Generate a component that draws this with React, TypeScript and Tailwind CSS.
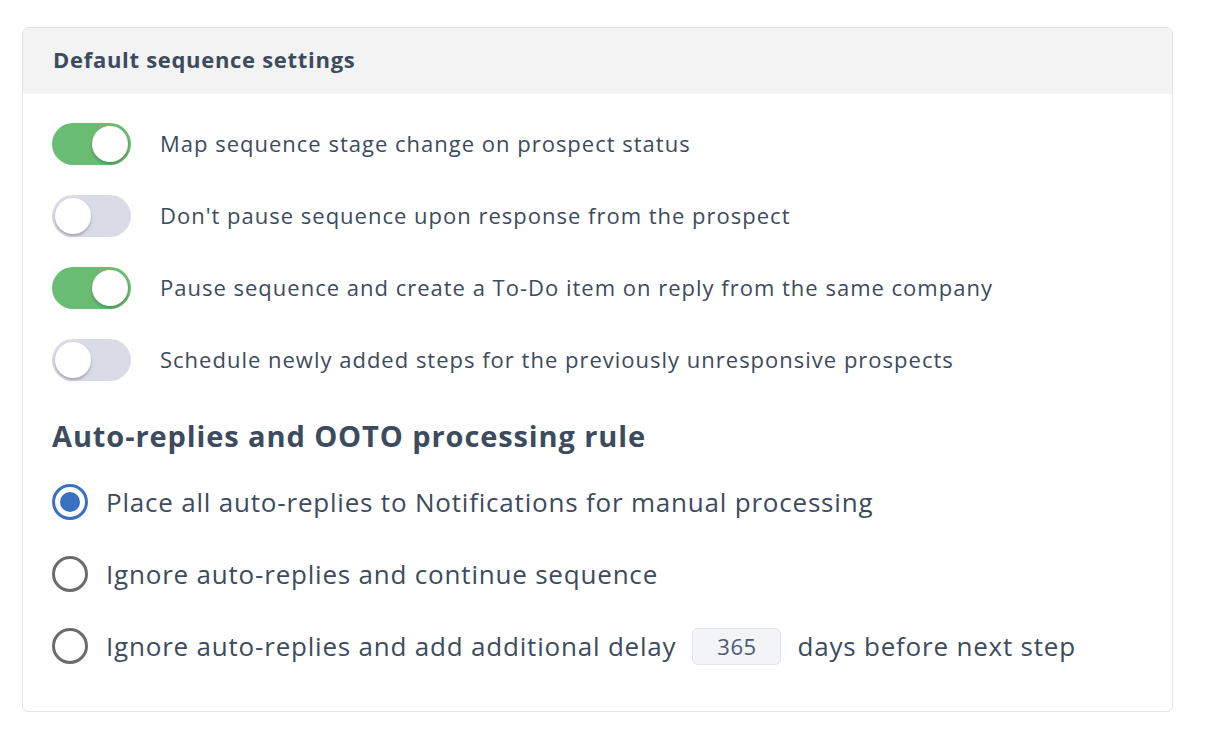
import React, { useState } from 'react';

const toggles = [
  { label: 'Map sequence stage change on prospect status', on: true },
  { label: "Don't pause sequence upon response from the prospect", on: false },
  { label: 'Pause sequence and create a To-Do item on reply from the same company', on: true },
  { label: 'Schedule newly added steps for the previously unresponsive prospects', on: false },
];

function Toggle({ on, onClick }: { on: boolean; onClick: () => void }) {
  return (
    <button
      onClick={onClick}
      className={`relative h-[42px] w-[79px] shrink-0 rounded-full ${on ? 'bg-[#69bd72]' : 'bg-[#d9dbe6]'}`}
    >
      <span
        className={`absolute top-[3px] h-[36px] w-[36px] rounded-full bg-white shadow-[0_2px_3px_rgba(0,0,0,0.25)] ${on ? 'left-[40px]' : 'left-[3px]'}`}
      />
    </button>
  );
}

function Radio({ checked }: { checked: boolean }) {
  return (
    <span
      className={`flex h-[36px] w-[36px] shrink-0 items-center justify-center rounded-full border-[3px] ${checked ? 'border-[#3b6fc0]' : 'border-[#6b6b6b]'}`}
    >
      {checked && <span className="h-[20px] w-[20px] rounded-full bg-[#3b6fc0]" />}
    </span>
  );
}

export default function App() {
  const [state, setState] = useState(toggles.map((t) => t.on));
  const [rule, setRule] = useState(0);

  return (
    <div className="min-h-screen bg-white pl-[22px] pt-[27px] font-['Open_Sans',sans-serif] text-[#3c4b5e]">
      <div className="w-[1151px] overflow-hidden rounded-[6px] border border-[#e3e4e8]">
        <div className="flex h-[66px] items-center bg-[#f3f3f3] px-[30px] pb-[4px]">
          <h2 className="text-[22px] font-bold tracking-[0.7px]">Default sequence settings</h2>
        </div>

        <div className="px-[29px] pb-[47px] pt-[29px]">
          <div className="flex flex-col gap-[30px]">
            {toggles.map((t, i) => (
              <div key={t.label} className="flex items-center gap-[29px]">
                <Toggle
                  on={state[i]}
                  onClick={() => setState((s) => s.map((v, j) => (j === i ? !v : v)))}
                />
                <span className="pb-[2px] text-[22px] leading-[30px] tracking-[1px]">{t.label}</span>
              </div>
            ))}
          </div>

          <h3 className="mt-[37px] text-[29px] font-bold leading-[36px] tracking-[0.9px]">
            Auto-replies and OOTO processing rule
          </h3>

          <div className="mt-[30px] flex flex-col gap-[36px] text-[26px] leading-[36px] tracking-[0.8px]">
            <label className="flex h-[36px] cursor-pointer items-center gap-[18px]" onClick={() => setRule(0)}>
              <Radio checked={rule === 0} />
              <span>Place all auto-replies to Notifications for manual processing</span>
            </label>
            <label className="flex h-[36px] cursor-pointer items-center gap-[18px]" onClick={() => setRule(1)}>
              <Radio checked={rule === 1} />
              <span>Ignore auto-replies and continue sequence</span>
            </label>
            <label className="flex h-[36px] cursor-pointer items-center gap-[18px]" onClick={() => setRule(2)}>
              <Radio checked={rule === 2} />
              <span>Ignore auto-replies and add additional delay</span>
              <span className="mx-[-2px] flex h-[37px] w-[89px] items-center justify-center rounded-[6px] border border-[#e3e4e8] bg-[#f3f4f6] text-[22px] tracking-[0.5px] text-[#4b5a78]">
                365
              </span>
              <span>days before next step</span>
            </label>
          </div>
        </div>
      </div>
    </div>
  );
}
